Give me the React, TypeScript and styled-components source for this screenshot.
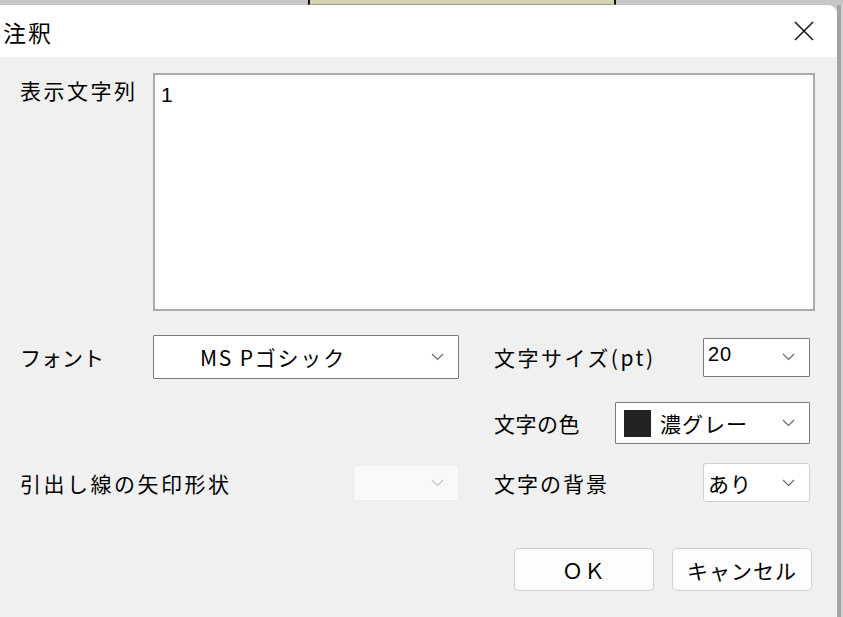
import React from "react";
import styled, { createGlobalStyle } from "styled-components";

const GlobalStyle = createGlobalStyle`
  html, body {
    margin: 0;
    padding: 0;
    background: #c6c6c6;
    overflow: hidden;
  }
  body {
    font-family: "Noto Sans CJK JP", "Noto Sans", sans-serif;
    color: #000;
  }
`;

const Screen = styled.div`
  width: 843px;
  height: 617px;
  display: flex;
  flex-direction: column;
  background: #c6c6c6;
`;

const TopStrip = styled.div`
  height: 5px;
  display: flex;
  flex-shrink: 0;
`;

const BackWindow = styled.div`
  margin-left: 308px;
  width: 308px;
  background: #d5d1b4;
  border-left: 2px solid #111;
  border-right: 2px solid #111;
  border-bottom: 1px solid #a09d8e;
  box-sizing: border-box;
`;

const Main = styled.div`
  flex: 1;
  display: flex;
`;

const Dialog = styled.div`
  width: 837px;
  display: flex;
  flex-direction: column;
  background: #f0f0f0;
  border-top-right-radius: 9px;
  overflow: hidden;
`;

const Edge = styled.div`
  flex: 1;
  background: #d2d2d2;
  border-left: 4px solid #a4a4a4;
`;

const TitleBar = styled.div`
  height: 52px;
  background: #fff;
  display: flex;
  align-items: center;
  justify-content: space-between;
  padding: 0 22px 0 3px;
  flex-shrink: 0;
`;

const Title = styled.span`
  font-size: 23px;
  letter-spacing: 2px;
  margin-top: 1px;
`;

const Body = styled.div`
  flex: 1;
  display: flex;
  flex-direction: column;
  padding: 16px 0 0 20px;
`;

const TextRow = styled.div`
  display: flex;
  align-items: flex-start;
`;

const Label = styled.span<{ $ls?: number }>`
  font-size: 21px;
  letter-spacing: ${(p) => (p.$ls ?? 2.5)}px;
  white-space: nowrap;
`;

const TextLabel = styled(Label)`
  width: 133px;
  margin-top: 2px;
`;

const TextArea = styled.div`
  width: 662px;
  height: 238px;
  box-sizing: border-box;
  background: #fff;
  border: 2px solid #abadb3;
  padding: 8px 6px;
  font-family: "Liberation Sans", "Noto Sans", sans-serif;
  font-size: 21px;
`;

const Row = styled.div<{ $top: number; $h: number }>`
  display: flex;
  align-items: center;
  margin-top: ${(p) => p.$top}px;
  height: ${(p) => p.$h}px;
`;

const Group = styled.div<{ $w: number }>`
  width: ${(p) => p.$w}px;
  display: flex;
  align-items: center;
  justify-content: space-between;
`;

const Spacer = styled.div`
  width: 35px;
`;

const Select = styled.div<{ $w: number; $h: number; $light?: boolean; $disabled?: boolean }>`
  width: ${(p) => p.$w}px;
  height: ${(p) => p.$h}px;
  box-sizing: border-box;
  display: flex;
  align-items: center;
  padding: 0 14px 0 4px;
  background: ${(p) => (p.$disabled ? "#f9f9f9" : "#fff")};
  border: 1px solid
    ${(p) => (p.$disabled ? "#ececec" : p.$light ? "#cfcfcf" : "#7a7a7a")};
  border-radius: ${(p) => (p.$light || p.$disabled ? "3px" : "1px")};
  font-size: 21px;
`;

const Value = styled.span<{ $center?: boolean }>`
  flex: 1;
  white-space: nowrap;
  padding-left: ${(p) => (p.$center ? "42px" : "0")};
  letter-spacing: ${(p) => (p.$center ? "1.8px" : "1px")};
`;

const NumValue = styled(Value)`
  font-family: "Liberation Sans", sans-serif;
  font-size: 20px;
  margin-top: -6px;
`;

const Swatch = styled.span`
  width: 27px;
  height: 27px;
  background: #232323;
  margin: 0 9px 0 4px;
`;

const ButtonRow = styled.div`
  display: flex;
  gap: 18px;
  margin: 46px 0 0 494px;
`;

const Button = styled.div`
  width: 140px;
  height: 43px;
  box-sizing: border-box;
  background: #fdfdfd;
  border: 1px solid #d0d0d0;
  border-radius: 5px;
  display: flex;
  align-items: center;
  justify-content: center;
  font-size: 21px;
  letter-spacing: 1px;
`;

const Chevron = ({ faded }: { faded?: boolean }) => (
  <svg width="13" height="8" viewBox="0 0 13 8">
    <polyline
      points="1,1 6.5,6.5 12,1"
      fill="none"
      stroke={faded ? "#c4c4c4" : "#6a6a6a"}
      strokeWidth="1.2"
    />
  </svg>
);

const CloseIcon = () => (
  <svg width="22" height="22" viewBox="0 0 22 22">
    <path d="M2 2 L20 20 M20 2 L2 20" stroke="#1a1a1a" strokeWidth="1.6" fill="none" />
  </svg>
);

export default function App() {
  return (
    <Screen>
      <GlobalStyle />
      <TopStrip>
        <BackWindow />
      </TopStrip>
      <Main>
        <Dialog>
          <TitleBar>
            <Title>注釈</Title>
            <CloseIcon />
          </TitleBar>
          <Body>
            <TextRow>
              <TextLabel>表示文字列</TextLabel>
              <TextArea>1</TextArea>
            </TextRow>

            <Row $top={24} $h={44}>
              <Group $w={439}>
                <Label $ls={0}>フォント</Label>
                <Select $w={306} $h={44}>
                  <Value $center>MS Pゴシック</Value>
                  <Chevron />
                </Select>
              </Group>
              <Spacer />
              <Group $w={316}>
                <Label>文字サイズ(pt)</Label>
                <Select $w={107} $h={39}>
                  <NumValue>20</NumValue>
                  <Chevron />
                </Select>
              </Group>
            </Row>

            <Row $top={23} $h={42}>
              <Group $w={439} />
              <Spacer />
              <Group $w={316}>
                <Label $ls={0.5}>文字の色</Label>
                <Select $w={195} $h={42}>
                  <Swatch />
                  <Value>濃グレー</Value>
                  <Chevron />
                </Select>
              </Group>
            </Row>

            <Row $top={19} $h={39}>
              <Group $w={439}>
                <Label>引出し線の矢印形状</Label>
                <Select $w={106} $h={36} $disabled>
                  <Value />
                  <Chevron faded />
                </Select>
              </Group>
              <Spacer />
              <Group $w={316}>
                <Label $ls={2}>文字の背景</Label>
                <Select $w={107} $h={39} $light>
                  <Value>あり</Value>
                  <Chevron />
                </Select>
              </Group>
            </Row>

            <ButtonRow>
              <Button>ＯＫ</Button>
              <Button>キャンセル</Button>
            </ButtonRow>
          </Body>
        </Dialog>
        <Edge />
      </Main>
    </Screen>
  );
}
